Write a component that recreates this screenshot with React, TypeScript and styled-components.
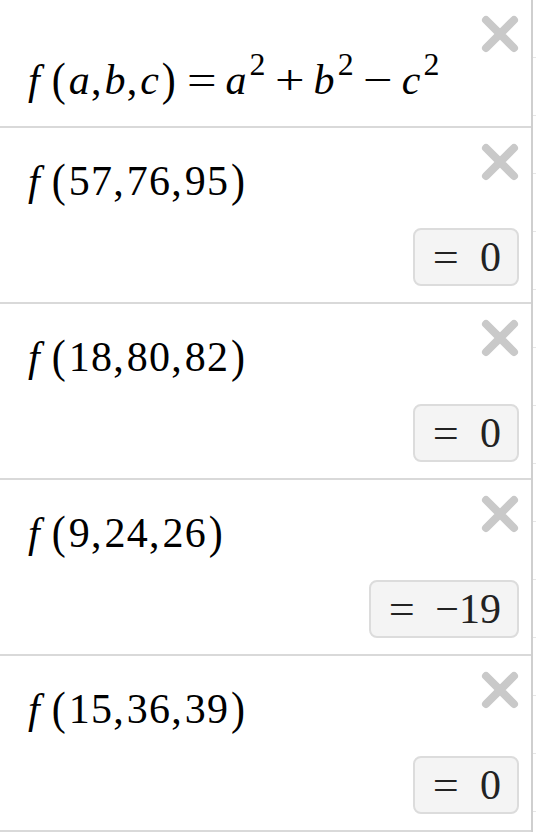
import styled, { createGlobalStyle } from 'styled-components'

const GlobalStyle = createGlobalStyle`
  html, body {
    margin: 0;
    padding: 0;
    background: #fff;
    overflow: hidden;
  }
`

const Layout = styled.div`
  display: flex;
  width: 536px;
  height: 832px;
`

const ExpressionList = styled.div`
  display: flex;
  flex-direction: column;
  width: 531px;
  border-right: 2px solid #cfcfcf;
`

const Graph = styled.div`
  flex: 1;
  background-color: #fff;
  background-image: repeating-linear-gradient(
    to bottom,
    transparent 0,
    transparent 57px,
    #e6e6e6 57px,
    #e6e6e6 58px
  );
`

const Row = styled.div<{ $first?: boolean }>`
  display: flex;
  flex-direction: column;
  height: ${(p) => (p.$first ? 126 : 174)}px;
  padding: 0 12px 0 28px;
  border-bottom: 2px solid #d9d9d9;
`

const Header = styled.div`
  display: flex;
  align-items: flex-start;
  justify-content: space-between;
`

const Formula = styled.div<{ $top: number }>`
  margin-top: ${(p) => p.$top}px;
  font-family: "Liberation Serif", "Times New Roman", serif;
  font-size: 42px;
  line-height: 48px;
  letter-spacing: 0.03em;
  color: #000;
  white-space: nowrap;
`

const Var = styled.span`
  font-style: italic;
`

const Fn = styled(Var)`
  margin-right: 0.22em;
`

const Paren = styled.span`
  display: inline-block;
  margin: 0 0.04em;
  transform: scaleY(1.1);
`

const Comma = styled.span`
  margin-right: 0.04em;
`

const Sup = styled.span`
  margin-left: 0.06em;
  font-size: 0.76em;
  vertical-align: 0.58em;
`

const Op = styled.span`
  display: inline-block;
  margin: 0 0.26em;
  transform: scaleX(1.25);
`

const CloseButton = styled.button`
  display: flex;
  width: 38px;
  height: 38px;
  margin-top: 15px;
  padding: 0;
  border: 0;
  background: none;
  cursor: pointer;
`

const ResultLine = styled.div`
  display: flex;
  justify-content: flex-end;
  margin-top: 23px;
`

const Result = styled.div`
  display: flex;
  gap: 22px;
  height: 54px;
  padding: 0 16px 0 19px;
  border: 2px solid #dcdcdc;
  border-radius: 8px;
  background: #f4f4f4;
  font-family: "Liberation Serif", "Times New Roman", serif;
  font-size: 42px;
  line-height: 54px;
  color: #222;
`

const ResultOp = styled.span`
  display: inline-block;
  transform: scaleX(1.1);
`

const CloseIcon = () => (
  <svg width="38" height="38" viewBox="0 0 38 38">
    <path d="M5 5 L33 33 M33 5 L5 33" stroke="#c9c9c9" strokeWidth="8" strokeLinecap="round" fill="none" />
  </svg>
)

const Args = ({ values }: { values: number[] }) => (
  <>
    <Fn>f</Fn>
    <Paren>(</Paren>
    {values.map((v, i) => (
      <span key={i}>
        {v}
        {i < values.length - 1 && <Comma>,</Comma>}
      </span>
    ))}
    <Paren>)</Paren>
  </>
)

const rows = [
  { args: [57, 76, 95], value: '0' },
  { args: [18, 80, 82], value: '0' },
  { args: [9, 24, 26], value: '\u221219' },
  { args: [15, 36, 39], value: '0' },
]

const App = () => {
  return (
    <>
      <GlobalStyle />
      <Layout>
        <ExpressionList>
          <Row $first>
            <Header>
              <Formula $top={41}>
                <Fn>f</Fn>
                <Paren>(</Paren>
                <Var>a</Var>
                <Comma>,</Comma>
                <Var>b</Var>
                <Comma>,</Comma>
                <Var>c</Var>
                <Paren>)</Paren>
                <Op>=</Op>
                <Var>a</Var>
                <Sup>2</Sup>
                <Op>+</Op>
                <Var>b</Var>
                <Sup>2</Sup>
                <Op>{'\u2212'}</Op>
                <Var>c</Var>
                <Sup>2</Sup>
              </Formula>
              <CloseButton aria-label="delete">
                <CloseIcon />
              </CloseButton>
            </Header>
          </Row>
          {rows.map((r) => (
            <Row key={r.args.join('-')}>
              <Header>
                <Formula $top={29}>
                  <Args values={r.args} />
                </Formula>
                <CloseButton aria-label="delete">
                  <CloseIcon />
                </CloseButton>
              </Header>
              <ResultLine>
                <Result>
                  <ResultOp>=</ResultOp>
                  <span>{r.value}</span>
                </Result>
              </ResultLine>
            </Row>
          ))}
        </ExpressionList>
        <Graph />
      </Layout>
    </>
  )
}

export default App
